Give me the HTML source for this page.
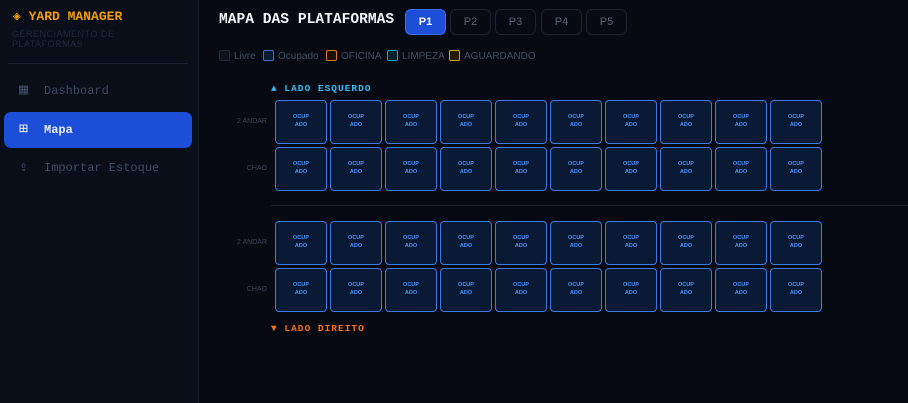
<!DOCTYPE html><html><head><style>
*{margin:0;padding:0;box-sizing:border-box}
body{width:908px;height:403px;background:#070a12;font-family:"Liberation Mono",monospace;overflow:hidden;position:relative}
.side{position:absolute;left:0;top:0;width:199px;height:403px;background:#0a0e19;border-right:1px solid #141a28}
.logo{position:absolute;left:13px;top:9px;color:#f59e0b;font-weight:bold;font-size:13px}
.sub{position:absolute;left:12px;top:29px;color:#1e293b;font-size:9px;line-height:10px;letter-spacing:.5px;font-family:"Liberation Sans",sans-serif;width:130px}
.hr{position:absolute;left:8px;top:63px;width:180px;height:1px;background:#1a2130}
.nav{position:absolute;left:4px;width:188px;height:36px;border-radius:7px;color:#3d4a60;font-size:12px;line-height:36px;padding-left:40px}
.nav .ic{position:absolute;left:15px;top:0;font-size:15px}
.act{background:#1d4ed8;color:#e6eeff;font-weight:bold}
.title{position:absolute;left:219px;top:12px;color:#f1f5f9;font-weight:bold;font-size:14.6px}
.pb{position:absolute;top:9px;width:41px;height:26px;border:1px solid #1b2231;border-radius:6px;color:#5b6477;font-size:11px;text-align:center;line-height:24px;font-family:"Liberation Sans",sans-serif}
.pb.on{background:#1d4ed8;border-color:#3b6ff0;color:#fff;font-weight:bold}
.leg{position:absolute;top:50px;font-size:10px;color:#414b5e;font-family:"Liberation Sans",sans-serif;line-height:12px}
.leg i{display:inline-block;width:11px;height:11px;border:1px solid;border-radius:2px;vertical-align:-2px;margin-right:4px}
.lab{position:absolute;font-size:9.5px;font-weight:bold;letter-spacing:1px}
.rl{position:absolute;right:641px;font-size:7px;color:#3a4356;font-family:"Liberation Sans",sans-serif}
.c{position:absolute;width:52px;height:44px;background:#0a1a35;border:1.5px solid #3b7be8;border-radius:4px;color:#4c93ff;font-family:"Liberation Sans",sans-serif;font-size:5.5px;font-weight:bold;text-align:center;padding-top:12px;line-height:8px}
</style></head><body>
<div class="side">
<div class="logo">◈ YARD MANAGER</div>
<div class="sub">GERENCIAMENTO DE PLATAFORMAS</div>
<div class="hr"></div>
<div class="nav" style="top:73px"><span class="ic">▦</span>Dashboard</div>
<div class="nav act" style="top:112px"><span class="ic" style="font-weight:normal">⊞</span>Mapa</div>
<div class="nav" style="top:150px"><span class="ic">⇪</span>Importar Estoque</div>
</div>
<div class="title">MAPA DAS PLATAFORMAS</div>
<div class="pb on" style="left:405px">P1</div>
<div class="pb" style="left:450px">P2</div>
<div class="pb" style="left:495px">P3</div>
<div class="pb" style="left:541px">P4</div>
<div class="pb" style="left:586px">P5</div>
<div class="leg" style="left:219px"><i style="border-color:#1e2533;background:#0d1220"></i>Livre</div>
<div class="leg" style="left:263px"><i style="border-color:#3b6fc8;background:#0a1a35"></i>Ocupado</div>
<div class="leg" style="left:326px"><i style="border-color:#e07a2a;background:#1d0f05"></i>OFICINA</div>
<div class="leg" style="left:387px"><i style="border-color:#22a5c5;background:#06202a"></i>LIMPEZA</div>
<div class="leg" style="left:449px"><i style="border-color:#d4a514;background:#231a02"></i>AGUARDANDO</div>
<div class="lab" style="left:271px;top:83px;color:#38bdf8">▲ LADO ESQUERDO</div>
<div class="lab" style="left:271px;top:323px;color:#f97316">▼ LADO DIREITO</div>
<div style="position:absolute;left:271px;top:205px;width:637px;height:1px;background:#1c2333"></div>
<div class="rl" style="top:118px">2 ANDAR</div>
<div class="rl" style="top:165px">CHAO</div>
<div class="rl" style="top:239px">2 ANDAR</div>
<div class="rl" style="top:286px">CHAO</div>
<div id="g"></div>
<script>
var h='',ys=[100,147,221,268];
ys.forEach(function(y){for(var i=0;i<10;i++)h+='<div class="c" style="left:'+(275+i*55)+'px;top:'+y+'px">OCUP<br>ADO</div>';});
document.getElementById('g').innerHTML=h;
</script>
</body></html>
